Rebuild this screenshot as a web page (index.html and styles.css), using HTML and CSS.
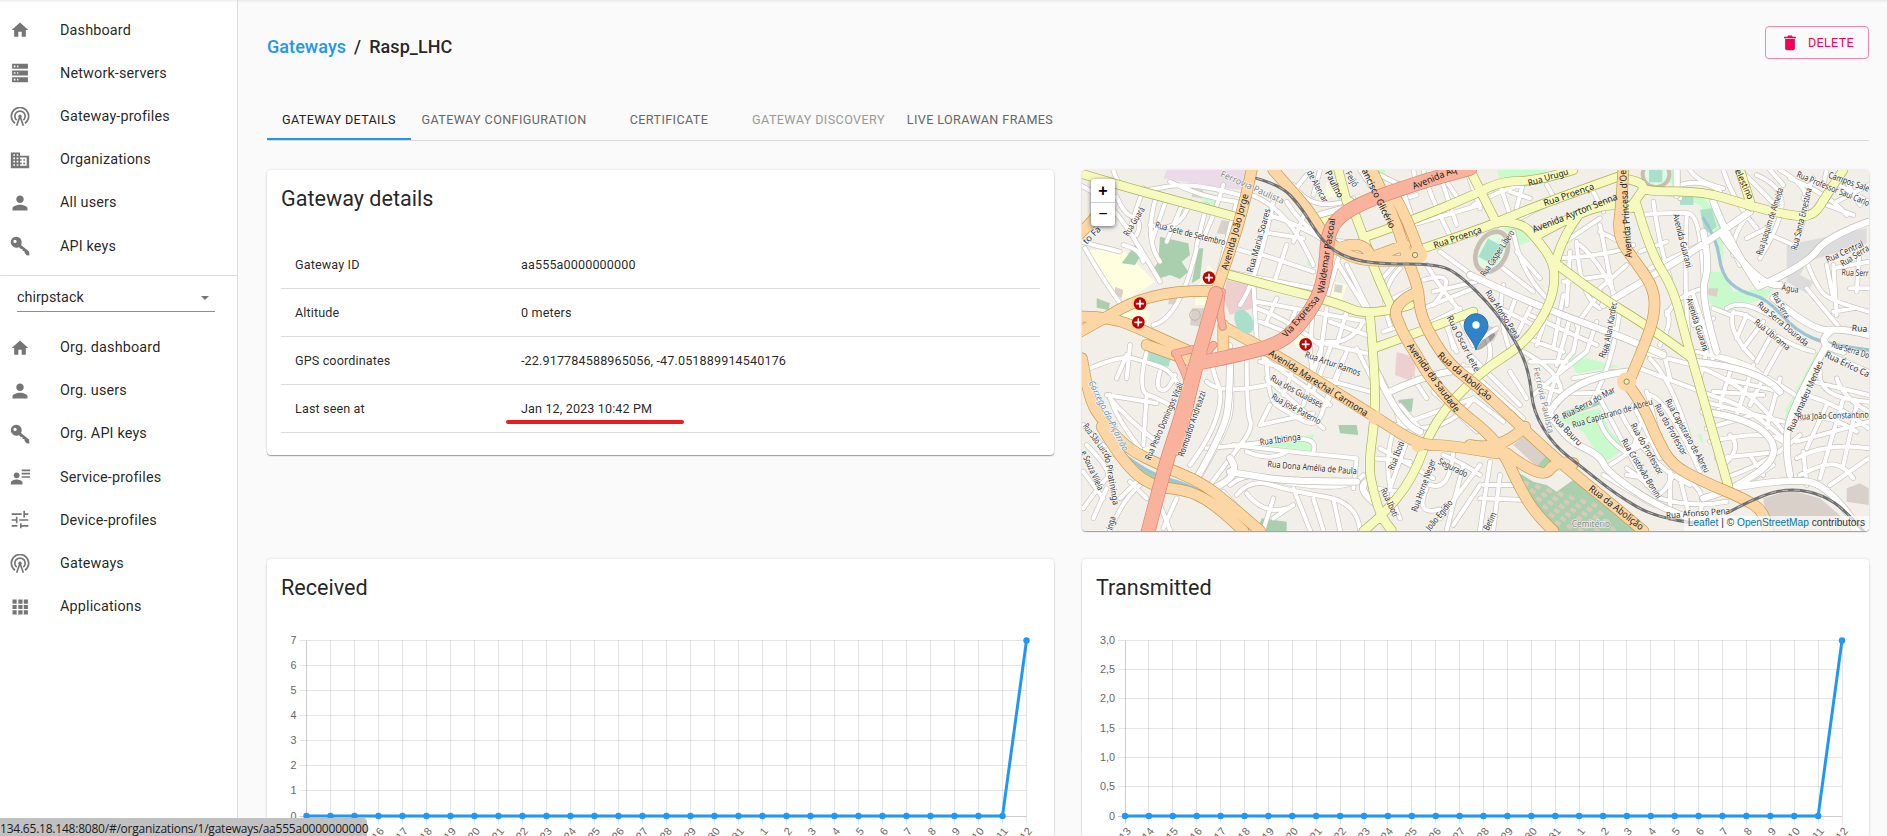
FILE: index.html
```
<!DOCTYPE html>
<html lang="en">
<head>
<meta charset="utf-8">
<title>ChirpStack - Rasp_LHC</title>
<link rel="stylesheet" href="styles.css">
</head>
<body>
<svg class="sprite" aria-hidden="true">
  <symbol id="i-home" viewBox="0 0 24 24"><path d="M10 20v-6h4v6h5v-8h3L12 3 2 12h3v8z"/></symbol>
  <symbol id="i-dns" viewBox="0 0 24 24"><path fill-rule="evenodd" d="M2.5 1h19v6h-19zM2.5 9h19v6h-19zM2.5 17h19v6h-19zM4.500 3v2h2V3zM8.500 3v2h1.500V3zM4.500 11v2h2v-2zM8.500 11v2h1.500v-2zM4.500 19v2h2v-2zM8.500 19v2h1.500v-2z"/></symbol>
  <symbol id="i-antenna" viewBox="0 0 24 24"><circle cx="12" cy="11" r="2"/><path fill="none" stroke="currentColor" stroke-width="2" d="M6 19.500A10.400 10.400 0 1 1 18 19.500M8 15.800a6.200 6.200 0 1 1 8 0M12 11l-4 11.500M12 11l4 11.500"/></symbol>
  <symbol id="i-business" viewBox="0 0 24 24"><path d="M12 7V3H1v19h22V7H12zM6 19H4v-2h2v2zm0-4H4v-2h2v2zm0-4H4V9h2v2zm0-4H4V5h2v2zm4 12H8v-2h2v2zm0-4H8v-2h2v2zm0-4H8V9h2v2zm0-4H8V5h2v2zm10 12h-8v-2h2v-2h-2v-2h2v-2h-2V9h8v10zm-2-8h-2v2h2v-2zm0 4h-2v2h2v-2z"/></symbol>
  <symbol id="i-person" viewBox="0 0 24 24"><path d="M12 12c2.500 0 4.500-2 4.500-4.500S14.500 3 12 3 7.500 5 7.500 7.500 9.500 12 12 12zm0 2c-3 0-9 1.340-9 4.500V21h18v-2.500C21 15.340 15 14 12 14z"/></symbol>
  <symbol id="i-key" viewBox="0 0 24 24"><path fill-rule="evenodd" d="M7.500 1a6.500 6.500 0 1 0 2.600 12.400l1.600.6 1.300 1.700 2 .1.200 2.100 2 .1.300 2 2.200 3 3.600.3-.4-4.800-9.700-7.800A6.500 6.500 0 0 0 7.500 1zM6 4.500a2 2 0 1 1 0 4 2 2 0 0 1 0-4z"/></symbol>
  <symbol id="i-profile" viewBox="0 0 24 24"><circle cx="8" cy="10" r="3.500"/><path d="M1 21v-2c0-2.700 4.700-4 7-4s7 1.300 7 4v2zM14 3h10v2H14zM14 7h10v2H14zM14 11h10v2H14z"/></symbol>
  <symbol id="i-tune" viewBox="0 0 24 24"><path d="M2 18v2h7v-2H2zM2 4v2h12V4H2zm12 18v-2h8v-2h-8v-2h-2v6h2zM7 8v3H2v2h5v3h2V8H7zm15 5v-2H11v2h11zM16 9h2V6h4V4h-4V1h-2v8z"/></symbol>
  <symbol id="i-apps" viewBox="0 0 24 24"><path d="M3 8h5V3H3v5zm7 13h5v-5h-5v5zm-7 0h5v-5H3v5zm0-6.500h5v-5H3v5zm7 0h5v-5h-5v5zM16.500 3v5h5V3h-5zM10 8h5V3h-5v5zm6.500 6.500h5v-5h-5v5zm0 6.500h5v-5h-5v5z"/></symbol>
  <symbol id="i-delete" viewBox="0 0 24 24"><path d="M5.500 19c0 1.500.8 2.500 2.200 2.500h8.600c1.400 0 2.200-1 2.200-2.500V6.500h-13zM20 3.500h-4.500L14.500 2h-5l-1 1.500H4v2h16z"/></symbol>
</svg>

<div class="app">
  <nav class="sidebar">
    <ul class="menu menu-main">
      <li><svg><use href="#i-home"/></svg><span>Dashboard</span></li>
      <li><svg><use href="#i-dns"/></svg><span>Network-servers</span></li>
      <li><svg><use href="#i-antenna"/></svg><span>Gateway-profiles</span></li>
      <li><svg><use href="#i-business"/></svg><span>Organizations</span></li>
      <li><svg><use href="#i-person"/></svg><span>All users</span></li>
      <li><svg><use href="#i-key"/></svg><span>API keys</span></li>
    </ul>
    <div class="org-select"><span>chirpstack</span><i class="caret"></i></div>
    <ul class="menu">
      <li><svg><use href="#i-home"/></svg><span>Org. dashboard</span></li>
      <li><svg><use href="#i-person"/></svg><span>Org. users</span></li>
      <li><svg><use href="#i-key"/></svg><span>Org. API keys</span></li>
      <li><svg><use href="#i-profile"/></svg><span>Service-profiles</span></li>
      <li><svg><use href="#i-tune"/></svg><span>Device-profiles</span></li>
      <li><svg><use href="#i-antenna"/></svg><span>Gateways</span></li>
      <li><svg><use href="#i-apps"/></svg><span>Applications</span></li>
    </ul>
  </nav>

  <main class="content">
    <header class="title-bar">
      <h1><a>Gateways</a><span class="slash">/</span><span>Rasp_LHC</span></h1>
      <button class="delete"><svg><use href="#i-delete"/></svg>DELETE</button>
    </header>
    <div class="tabs">
      <span class="tab t1 active">GATEWAY DETAILS</span>
      <span class="tab t2">GATEWAY CONFIGURATION</span>
      <span class="tab t3">CERTIFICATE</span>
      <span class="tab t4 disabled">GATEWAY DISCOVERY</span>
      <span class="tab t5">LIVE LORAWAN FRAMES</span>
    </div>

    <div class="grid">
      <section class="card details">
        <h2>Gateway details</h2>
        <dl>
          <div><dt>Gateway ID</dt><dd>aa555a0000000000</dd></div>
          <div><dt>Altitude</dt><dd>0 meters</dd></div>
          <div><dt>GPS coordinates</dt><dd>-22.917784588965056, -47.051889914540176</dd></div>
          <div><dt>Last seen at</dt><dd><span class="marked">Jan 12, 2023 10:42 PM</span></dd></div>
        </dl>
      </section>

      <section class="card map">
        <svg id="map" viewBox="6 15 2361 1083" preserveAspectRatio="none"></svg>
        <div class="zoom-ctl"><span>+</span><span>−</span></div>
        <div class="attribution"><a>Leaflet</a> | © <a>OpenStreetMap</a> contributors</div>
      </section>

      <section class="card chart"><h2>Received</h2><svg id="rx"></svg></section>
      <section class="card chart"><h2>Transmitted</h2><svg id="tx"></svg></section>
    </div>
  </main>
</div>
<div class="status">134.65.18.148:8080/#/organizations/1/gateways/aa555a0000000000</div>
<script src="app.js"></script>
</body>
</html>
```
FILE: styles.css
```
* { box-sizing: border-box; }
body { margin: 0; height: 836px; overflow: hidden; background: #fafafa; color: rgba(0,0,0,.87); font-family: Roboto, sans-serif; }
.sprite { position: absolute; width: 0; height: 0; }
h1, h2, ul, dl, dd { margin: 0; padding: 0; font-weight: 400; }
.app { display: flex; height: 836px; box-shadow: inset 0 3px 3px -2px rgba(0,0,0,.1); }
.sidebar { width: 238px; flex: none; background: #fff; border-right: 1px solid #dcdcdc; box-shadow: inset 0 3px 3px -2px rgba(0,0,0,.1); }
.menu { list-style: none; padding-top: 8px; }
.menu li { display: flex; align-items: center; height: 43.200px; padding-left: 10px; font-size: 14.400px; letter-spacing: .15px; }
.menu svg { width: 20px; height: 20px; margin-right: 30px; fill: #757575; color: #757575; flex: none; }
.menu-main { height: 276px; padding-top: 8.600px; border-bottom: 1px solid #dcdcdc; }
.org-select { display: flex; align-items: center; justify-content: space-between; margin: 8px 22px 6px 17px; height: 28px; border-bottom: 1px solid #8e8e8e; font-size: 14.400px; padding: 0 6px 0 0; }
.caret { border: 4.500px solid transparent; border-top-color: #757575; border-bottom: 0; }
.content { flex: 1; padding: 0 18px 0 29px; }
.title-bar { display: flex; justify-content: space-between; padding-top: 26px; height: 99px; }
h1 { display: flex; font-size: 18px; font-weight: 500; letter-spacing: .06px; line-height: 42px; }
h1 a { color: #2196f3; }
.slash { margin: 0 8px; }
.delete { display: flex; align-items: center; width: 104px; height: 33px; padding: 0 0 0 15px; border: 1px solid #fa84a8; border-radius: 4px; background: none; color: #f50057; font: 400 12.600px Roboto, sans-serif; letter-spacing: .3px; }
.delete svg { width: 18px; height: 18px; margin-right: 9px; fill: #f50057; }
.tabs { display: flex; height: 42px; border-bottom: 1px solid #d9d9d9; }
.tab { height: 41px; line-height: 42px; text-align: center; font-size: 12.600px; letter-spacing: .4px; color: #666; white-space: nowrap; }
.tab.active { color: #212121; border-bottom: 2px solid #2196f3; letter-spacing: .36px; }
.tab.disabled { color: #999; }
.t1 { width: 144px; } .t2 { width: 186px; } .t3 { width: 144px; } .t4 { width: 155px; } .t5 { width: 168px; }
.grid { display: grid; grid-template-columns: 787px 787px; column-gap: 28px; row-gap: 28px; padding-top: 29px; align-items: start; }
.card { background: #fff; border-radius: 4px; box-shadow: 0 1px 1px rgba(0,0,0,.35), 0 0 3px rgba(0,0,0,.12); overflow: hidden; }
h2 { font-size: 21.600px; line-height: 30px; }
.details { height: 285px; padding: 14px 14px 0; }
dl { margin-top: 27.500px; }
dl div { display: flex; height: 47.800px; padding: 0 14px; align-items: center; border-bottom: 1px solid #dcdcdc; font-size: 12.600px; letter-spacing: .13px; }
dt { width: 226px; }
.marked { position: relative; }
.marked::after { content: ""; position: absolute; left: -15px; top: 19px; width: 178px; height: 4px; border-radius: 2px; background: #eb1c20; }
.map { height: 361px; position: relative; }
.map > svg { display: block; width: 787px; height: 361px; background: #f2efe9; }
.zoom-ctl { position: absolute; left: 9px; top: 9px; width: 24px; height: 47px; background: #fff; border-radius: 3px; box-shadow: 0 1px 4px rgba(0,0,0,.6); }
.zoom-ctl span { display: block; height: 23px; text-align: center; font: bold 16px/24px "Liberation Sans", sans-serif; color: #000; }
.zoom-ctl span + span { border-top: 1px solid #ccc; line-height: 22px; font-weight: 400; }
.attribution { position: absolute; right: 0; bottom: 0; height: 15px; padding: 0 4px; background: rgba(255,255,255,.7); color: #333; font: 10.200px/14px "Liberation Sans", Arial, sans-serif; }
.attribution a { color: #0078a8; }
.chart { height: 277px; padding-top: 14px; border-radius: 4px 4px 0 0; }
.chart h2 { padding-left: 14px; }
.chart svg { display: block; width: 787px; height: 233px; font: 10.800px "Liberation Sans", Arial, sans-serif; fill: #666; }
.gl { stroke: rgba(0,0,0,.1); } .gl0 { stroke: rgba(0,0,0,.2); }
.series { fill: none; stroke: #2196f3; stroke-width: 3; }
.dot { fill: #2196f3; }
.status { position: absolute; left: 0; bottom: 0; width: 367px; height: 18px; background: #c1c1c1; border-top-right-radius: 4px; font: 12px/21px "Open Sans", sans-serif; letter-spacing: -.22px; color: #1a1a1a; white-space: nowrap; }
#map path { fill: none; stroke-linecap: round; stroke-linejoin: round; }
#map .park { fill: #aacfae; } #map .grass { fill: #c8facc; } #map .pitch { fill: #aadfcb; } #map .school { fill: #ffffe0; } #map .bld { fill: #d9d0c9; } #map .ind { fill: #ebdbe8; } #map .hosp { fill: #eecfcf; } #map .yard { fill: #dcdcdc; }
#map text { font: 27px "Noto Sans", sans-serif; fill: #333; stroke: rgba(255,255,255,.75); stroke-width: 4px; paint-order: stroke; }
#map text.onroad { stroke: none; fill: #222; }
#map text.rail { fill: #888; }
#map text.water { fill: #5a98cf; font-style: italic; }
```
FILE: app.js
```
const NS = 'http://www.w3.org/2000/svg';
function add(parent, tag, attrs, text) {
  const e = document.createElementNS(NS, tag);
  for (const k in attrs) e.setAttribute(k, attrs[k]);
  if (text !== undefined) e.textContent = text;
  parent.appendChild(e);
  return e;
}

/* ---------- charts ---------- */
function chart(id, x0, pitch, labels) {
  const s = document.getElementById(id), top = 37.5, bottom = 213.5;
  const days = [];
  for (let d = 13; d <= 31; d++) days.push(d);
  for (let d = 1; d <= 12; d++) days.push(d);
  const xr = x0 + 30 * pitch;
  labels.forEach((t, i) => {
    const y = Math.round(bottom - (bottom - top) * i / (labels.length - 1)) - .5;
    add(s, 'line', { x1: x0 - 7, x2: xr, y1: y, y2: y, class: i ? 'gl' : 'gl0' });
    add(s, 'text', { x: x0 - 10, y: y + 3, 'text-anchor': 'end' }, t);
  });
  days.forEach((d, i) => {
    const x = Math.round(x0 + i * pitch - .5) + .5;
    add(s, 'line', { x1: x, x2: x, y1: top, y2: bottom + 7, class: i ? 'gl' : 'gl0' });
    add(s, 'text', { transform: `translate(${x + 6} ${bottom + 15}) rotate(-50)`, 'text-anchor': 'end' }, d);
  });
  add(s, 'polyline', { class: 'series', points: `${x0},${bottom - .5} ${x0 + 29 * pitch},${bottom - .5} ${xr},${top}` });
  days.forEach((d, i) => add(s, 'circle', { class: 'dot', r: 3.2, cx: x0 + i * pitch, cy: i === 30 ? top : bottom - .5 }));
}
chart('rx', 39.5, 24, ['0', '1', '2', '3', '4', '5', '6', '7']);
chart('tx', 43, 23.9, ['0', '0,5', '1,0', '1,5', '2,0', '2,5', '3,0']);

/* ---------- map ---------- */
const map = document.getElementById('map');

/* turns "x,y x,y ..." into a path smoothed through the midpoints */
function smooth(str) {
  const p = str.trim().split(/\s+/).map(a => a.split(',').map(Number));
  if (p.length < 3) return 'M' + p.join('L');
  let d = 'M' + p[0];
  for (let i = 1; i < p.length - 1; i++) {
    const q = i === p.length - 2 ? p[i + 1] : [(p[i][0] + p[i + 1][0]) / 2, (p[i][1] + p[i + 1][1]) / 2];
    d += `Q${p[i]} ${q}`;
  }
  return d;
}
const areas = [
  ['ind', '260,15 500,15 495,75 430,70 250,40'],
  ['school', '15,255 130,255 225,350 150,400 120,400'], ['school', '130,405 210,440 200,490 100,450'],
  ['school', '350,375 385,300 405,320 380,420 345,420'], ['school', '640,510 690,500 700,540 650,550'],
  ['school', '745,345 800,360 780,425 740,400'], ['school', '740,50 780,90 735,100'], ['school', '165,850 225,845 230,865 180,875'],
  ['park', '240,215 325,235 330,270 305,290 325,320 300,342 270,330 240,340 215,320 235,290'],
  ['park', '335,355 355,250 370,250 360,340'], ['park', '125,295 165,240 190,260 165,300'], ['park', '50,400 90,415 85,435 50,428'],
  ['park', '775,780 830,780 835,810 780,805'], ['park', '955,705 1000,700 995,740 960,740'], ['park', '545,1060 620,1070 620,1098 530,1098'],
  ['park', '150,900 190,910 320,960 250,965 200,955'],
  ['grass', '370,85 410,95 405,125 365,115'], ['grass', '880,15 915,15 915,50 895,50'], ['grass', '505,840 700,808 700,862 600,855'],
  ['grass', '680,285 695,300 680,305'], ['grass', '1190,250 1215,240 1200,320 1185,300'], ['grass', '950,425 1000,410 1000,430 960,435'],
  ['pitch', '205,555 275,575 265,605 205,590'],
  ['hosp', '440,345 530,365 520,430 450,450 430,400'], ['hosp', '950,560 1010,580 1000,650 945,630'],
  ['bld', '425,165 460,170 450,210 410,205'], ['bld', '335,430 375,430 365,485 330,480'], ['bld', '270,380 300,380 295,418 265,418'], ['bld', '765,358 788,360 785,385 762,380'], ['bld', '1210,480 1260,490 1240,530 1200,520'],
  ['bld', '105,365 130,375 125,400 105,390'], ['bld', '340,70 370,75 365,100 335,95'],
  ['grass', '1250,15 1400,15 1390,40 1260,45'], ['grass', '1690,15 1790,15 1780,55 1700,55'],
  ['grass', '1800,95 1870,95 1910,150 1930,220 1930,290 1900,200 1860,120'], ['grass', '1890,320 1930,320 1960,380 2080,370 2060,400 1990,420 1940,440 1900,430 1885,400'],
  ['pitch', '1800,95 1840,95 1840,120 1800,120'], ['pitch', '1860,135 1895,130 1910,185 1875,210'], ['grass', '1270,190 1330,190 1350,230 1320,240'],
  ['bld', '1885,370 1915,370 1910,395 1885,390'], ['yard', '2120,240 2220,220 2360,190 2360,235 2180,290 2160,330 2200,350 2180,385 2120,350'],
  ['grass', '1455,562 1560,590 1620,605 1490,625'], ['grass', '1430,760 1560,730 1590,800 1635,835 1620,860 1570,895 1510,800'], ['park', '1450,740 1560,705 1570,715 1450,760'],
  ['grass', '2210,560 2240,570 2150,720 2125,850 2110,800 2120,730'], ['grass', '1850,810 1865,805 1870,840'],
  ['park', '1310,920 1360,950 1400,960 1430,980 1500,930 1650,1050 1690,1098 1430,1098 1370,1030'], ['bld', '1300,840 1340,805 1410,870 1375,910'], ['park', '1370,905 1400,870 1415,890 1390,910'],
  ['bld', '2050,1000 2130,975 2220,1000 2290,1060 2320,1098 2060,1098'], ['bld', '2300,970 2340,955 2366,970 2366,1020 2300,1010']
];
areas.forEach(([c, p]) => add(map, 'polygon', { class: c, points: p }));
add(map, 'ellipse', { cx: 1728, cy: 28, rx: 40, ry: 38, fill: '#dffce2', stroke: '#c9beb4', 'stroke-width': 12 });
add(map, 'rect', { x: 1707, y: 10, width: 40, height: 42, class: 'pitch' });
add(map, 'circle', { cx: 345, cy: 450, r: 16, fill: 'none', stroke: '#c0b5aa', 'stroke-width': 3 });
/* cemetery plots */
for (let i = 0; i < 7; i++) for (let j = 0; j < 6; j++) {
  const x = 1335 + i * 34 + j * 19, y = 945 + j * 24 + i * 11;
  if (x < 1560 + j * 20) add(map, 'rect', { x, y, width: 17, height: 12, fill: '#f0c9bd', opacity: .65, transform: `rotate(32 ${x} ${y})` });
}

const minor = `
0,60 40,80 100,130 170,230 240,350|6,230 40,240 120,260|15,250 60,330 120,415|100,15 115,70 190,80 330,50 480,90
110,95 130,145 190,170 170,210|190,70 150,190|230,90 190,220 240,290|260,100 215,230|310,110 260,230|270,50 370,100 470,110
380,120 350,240|430,60 410,130 370,220|330,110 300,210 210,180|470,110 420,300 380,480|350,250 300,460 220,480|130,240 180,250 190,290
500,85 620,120 700,300|580,110 530,350 480,420|560,150 620,160 740,230|540,200 670,220|520,260 700,320|680,130 640,230|620,240 580,360
620,110 700,240 820,230|430,240 530,270|440,320 700,370|640,60 700,150 820,100|680,30 640,80|720,15 700,90|760,60 800,120|900,30 960,60
940,110 1010,90|960,190 1200,120|1030,15 1050,100 1120,230|1090,60 1130,180|1160,15 1200,130|1000,15 1010,60|840,15 870,60|1140,110 1080,20
770,290 850,420|790,230 740,400|800,300 870,440|900,350 960,280|1030,345 1150,310 1060,420|1040,300 1100,400 1170,470|1060,380 1190,350|1080,260 1190,340
530,410 860,470|530,430 620,460 720,540|520,350 530,520|590,400 560,470|650,430 620,500|700,400 690,560|740,430 720,580|800,440 770,540|850,470 810,540 740,530|750,470 860,510|540,470 640,510
930,480 890,380 960,310|910,500 970,480|940,400 1000,370|1030,430 1180,370|1040,480 1140,430|1090,460 1130,560|1130,440 1180,540|1100,470 1120,550
150,540 140,640|30,610 120,570 200,590 280,620 300,670|200,560 170,680 240,700 300,740|140,570 110,640|240,620 225,670 265,680 285,630
80,690 230,715|90,700 150,770 230,830|90,690 95,740 180,850|10,780 60,840 120,880|200,690 190,840|20,840 100,920 60,960 10,1030
10,920 70,1000|150,950 200,1000|120,1000 180,940|80,970 40,1060|90,1095 130,1000 180,960|240,1020 270,1095|290,1000 250,1090
450,540 460,700 440,800 350,950|500,560 500,740 520,790 450,880 390,960|380,650 420,690 560,660|390,560 400,630 430,690 390,820 330,900
560,560 560,700 620,740 710,790 740,700 790,580|550,580 700,680 750,720|560,640 730,790|640,610 610,690|690,560 700,640|720,560 670,720
540,780 700,745|540,780 570,720|460,840 620,860 830,880|380,850 500,840 720,810 700,860|500,860 570,890 620,860|450,960 500,920 630,960 820,970 850,930
540,590 870,680|710,530 880,570|750,550 700,680|800,560 740,720|830,550 880,650|470,990 510,940 640,980 830,1010 840,1095|500,985 550,1050 620,1030
580,1000 550,1095|640,970 690,1095|700,1000 730,1095|760,1000 780,1095|430,980 520,1080|640,1020 580,1060|830,880 820,970
930,680 1080,620 1190,600|960,780 940,690 880,600|890,760 1080,840 1180,700|1060,680 1130,740 1190,800|1000,640 1040,700|960,720 1020,790|960,780 1180,700
880,880 990,890|900,850 1060,940|940,800 900,920 960,1060|980,830 930,970|880,970 960,980|1090,870 1160,900 1200,930|1120,860 1110,980 1050,960|1150,900 1100,1095
1200,900 1080,1060|1040,970 1000,1060 1090,1030|1200,960 1120,1080|1230,890 1200,1095|1260,930 1240,1095|1200,1000 1340,1005|1210,960 1320,960
1150,600 1330,760|1170,570 1320,720|1210,500 1260,580 1190,640|1180,700 1270,770|1190,530 1250,490
1180,120 1280,60 1470,20|1260,60 1290,150|1330,50 1310,130|1400,60 1430,110|1290,80 1350,100|1300,170 1470,80|1530,60 1570,140
1300,200 1320,320 1400,400|1270,310 1360,380|1310,260 1380,340|1470,260 1460,420|1440,280 1600,270 1660,240|1450,350 1590,330|1490,230 1500,400 1560,430|1560,180 1600,390
1500,240 1560,290 1610,400|1440,240 1560,160|1560,200 1620,230|1640,300 1560,370|1270,360 1250,440 1290,560|1310,390 1270,500|1360,410 1310,510|1420,390 1370,540|1450,390 1420,550
1350,450 1460,500 1550,540|1340,520 1450,560|1470,460 1430,600|1500,460 1480,560|1550,470 1520,560|1600,490 1570,570|1260,430 1360,480|1620,430 1600,600 1530,720
1560,380 1490,480|1680,150 1800,140 1850,150 1870,300 1870,390 1900,600|1720,110 1740,250 1770,340|1680,260 1760,230|1710,310 1860,240|1820,150 1810,390 1830,560|1870,370 1790,390 1760,450
1760,440 1780,470 1740,540|1840,390 1890,540|1840,480 1900,460|1790,15 1800,100|1800,60 1870,40 1920,80|1830,15 1850,50 1930,70|1930,15 1960,110 2030,190
1900,110 1910,160 1980,300|1960,270 1950,210 2020,130|1980,15 2080,110 2110,150|2030,30 2100,60 2110,160 2040,280|2070,15 2110,60|2100,15 2180,60 2180,150 2140,250
2130,40 2250,90 2300,150|2270,110 2366,60|2260,50 2366,110|2200,40 2170,100|2240,120 2320,150|2240,15 2230,60|2300,50 2340,120|2050,200 2140,240|2000,220 2060,190
2180,290 2210,370 2260,410 2366,440|2240,300 2260,400|2260,310 2366,290|2260,300 2270,450|2340,240 2330,380|2310,370 2366,370|2260,440 2320,430|2180,370 2280,490
1950,450 1980,430 2120,540 2200,560|1940,430 2000,390 2140,500|1960,440 1940,500 2020,580|2000,450 1970,520|2050,470 1990,550|2080,500 2030,590|2100,550 2060,620|1900,430 1950,450
1900,570 2060,600 2090,690|1850,560 1930,580 2060,630 2160,700|1840,600 1900,620 2030,700 2110,800|1680,560 1840,600|1710,580 1790,660 1850,900|1750,560 1770,640
1680,610 1860,680 2010,730 2120,830|1870,710 2110,770|1880,790 2020,750|1890,830 2060,790 2110,830|1910,880 2100,860|1930,940 2060,900 2160,810|1960,980 2080,900
2010,870 2050,930|1880,560 1860,640|1960,590 1910,750|2020,600 1970,750|2060,620 2010,720|2100,640 2060,790|1930,640 2100,680|1900,680 2050,690|1950,810 1990,850 1930,900
2220,620 2210,700 2366,710|2230,560 2366,620|2200,650 2366,690|2180,690 2280,720 2366,790|2160,760 2240,740 2330,800|2150,830 2366,770|2150,880 2240,830 2366,850|2160,930 2240,890 2300,910 2320,940
2290,700 2220,940|2330,720 2290,900|2366,880 2250,960|2270,640 2290,700 2366,740|2170,860 2180,960|2240,720 2180,850
1700,680 1720,730 1740,860|1710,690 1760,700 1860,920|1620,740 1700,900 1830,960|1560,700 1620,820 1700,960|1660,720 1740,880|1640,850 1740,810|1590,900 1700,830|1560,770 1580,830 1650,870
1640,910 1700,950 1740,1010 1780,930|1770,920 1770,1060|1790,930 1890,970 1860,1040|1740,1000 1840,1030 1940,1010|1700,940 1640,930|1680,780 1660,850|1800,940 1830,1060|1570,930 1720,1020
1400,740 1420,620 1480,560|1360,690 1440,620 1520,560|1330,560 1480,640 1430,720|1480,640 1600,620|1370,640 1410,700 1570,680|1350,590 1460,590|1290,620 1340,700`;
const major = `
1170,330 1300,390 1470,460 1640,520 1750,570|1570,420 1720,330 1870,240 2010,140|1900,110 1940,220 2035,365|2035,365 2180,300 2240,215 2366,170|1930,215 2040,370 2100,360|1870,200 1890,300 1860,390 1910,560
450,560 450,700 430,800 350,940|450,920 500,930 640,950 830,950|450,880 490,930 400,970|930,680 1100,600 1200,620|890,620 960,780 1020,800|1410,740 1470,640 1640,620|1400,730 1450,820 1560,870 1580,920 1740,1030 1830,1060
1840,590 2040,610 2100,680|1870,740 2020,760 2110,870 1950,980 1870,1000|2240,540 2150,700 2110,830 2130,930|1950,970 2120,940 2250,960 2340,1095|2250,500 2200,540 2290,560|2080,400 2200,500 2290,490 2366,510|860,950 830,970 880,1010|960,60 990,150|720,150 830,120|1790,15 1790,90`;
const yellow = `
0,25 150,70 300,110 465,155|450,330 600,370 760,410 870,455 990,420|870,455 880,560 888,740 865,900 880,980 905,1060 935,1095|810,110 850,210 880,310 940,440
850,218 1000,165 1180,90 1265,48 1370,48 1480,15|1030,250 1180,200 1260,168 1390,115 1615,35|715,175 800,150|800,110 775,15|1250,170 1320,170 1370,220 1420,290 1425,360 1400,440 1330,540 1200,620 1060,770 1000,940 900,1060 850,1098
1375,210 1480,150 1610,110 1670,130|1430,280 1450,210 1500,145|1170,15 1250,175|1420,290 1550,390 1700,480 1830,575|1620,38 1690,50 1685,80 1870,78 2000,120 2130,152 2200,155 2240,90 2290,15|1685,80 1650,130|1670,120 1710,260 1780,370 1815,510 1890,770 1945,965|1980,15 2015,125|900,1050 935,1098|880,550 1020,500 1180,440`;
const orange = `
515,15 500,90 460,230 410,375|580,15 620,60 690,140 750,240 830,285 930,288 1000,285 1020,265|875,15 915,100 955,190 985,290 1015,370 1020,440 1050,510 1110,600 1200,670 1270,735 1410,865 1510,950 1610,1030 1690,1098
940,85 985,165 1015,255|770,252 860,215 875,285|975,240 880,275|1015,380 935,415 965,500 1010,570 1050,640 1130,730 1220,800 1270,860 1320,970 1370,1050 1420,1098|430,485 570,560 700,640 885,755 1015,840 1110,840 1250,865
1170,840 1260,860 1335,785|1280,865 1385,945 1430,885 1480,895|0,455 90,455 200,500 330,560|90,450 210,372 395,378|0,500 90,450|0,205 60,150 80,100|6,580 25,700 70,770 140,850 250,905 360,950 440,1010 540,1098|65,785 120,880 210,965 330,975 420,1030 490,1098|430,480 430,560|340,590 200,540
1630,15 1625,110 1612,215 1670,295 1722,370 1725,450 1690,550 1645,655|1645,660 1690,720 1730,820 1775,900 1870,950 1990,1000 2055,1040 2065,1098`;
const slip = '425,380 415,440 428,485|288,565 315,620 335,680|285,565 350,550|400,540 345,600';
const red = `
1170,10 1060,40 950,75 850,112 775,155 742,210 738,310 715,400 660,480 600,535 480,570 350,595|408,385 385,470 335,640 300,770 255,900 205,1098|360,560 335,650 290,850`;
const groups = [
  [minor, 12, '#fff', '#c8c4be', 4], [major, 19, '#fff', '#c2beb8', 4],
  [yellow, 25, '#f7fabf', '#aab055', 4], [orange, 31, '#fcd6a4', '#c59a50', 4], [slip, 20, '#f9b29c', '#d88572', 4], [red, 40, '#f9b29c', '#d88572', 4]
];
/* stream */
['1870,160 1910,220 1925,330 1980,380 2060,400 2150,500 2250,540 2366,555', '120,860 200,925 330,960 430,1020 520,1098'].forEach(p =>
  add(map, 'path', { d: smooth(p), stroke: '#9cc5d3', 'stroke-width': 10 }));
groups.forEach(([src, w, fill, edge, b]) => {
  const d = src.trim().split(/[|\n]/).map(smooth).join('');
  add(map, 'path', { d, stroke: edge, 'stroke-width': w + b });
  add(map, 'path', { d, stroke: fill, 'stroke-width': w });
});
/* stadium and lake */
add(map, 'ellipse', { cx: 1235, cy: 260, rx: 44, ry: 64, transform: 'rotate(28 1235 260)', fill: '#dffce2', stroke: '#c9beb4', 'stroke-width': 14 });
add(map, 'rect', { x: 1207, y: 230, width: 56, height: 62, transform: 'rotate(28 1235 260)', class: 'pitch' });
add(map, 'ellipse', { cx: 492, cy: 470, rx: 26, ry: 38, class: 'pitch', transform: 'rotate(-30 492 470)' });
[[1640, 650, 22], [1015, 268, 20], [885, 758, 14], [1015, 840, 14], [1270, 860, 10]].forEach(([cx, cy, r]) =>
  add(map, 'circle', { cx, cy, r, fill: '#fcd6a4', stroke: '#fcd6a4', 'stroke-width': 14 }));
[[1640, 650], [1005, 270]].forEach(([cx, cy]) => add(map, 'circle', { cx, cy, r: 8, fill: '#d9f0cf', stroke: '#a98a3c', 'stroke-width': 3 }));
/* railway */
['530,40 600,60 660,120 730,235 800,280 900,297 1060,297 1130,320 1250,440 1325,560 1350,640 1360,740 1420,840 1510,910 1610,990 1730,1060 1850,1075',
 '1940,1045 2040,990 2140,970 2230,990 2300,1040 2350,1098'].forEach(p => {
  add(map, 'path', { d: smooth(p), stroke: '#707070', 'stroke-width': 9 });
  add(map, 'path', { d: smooth(p), stroke: '#bbb', 'stroke-width': 3, 'stroke-dasharray': '18 18', style: 'stroke-linecap:butt' });
});

/* labels run from the first point to the second */
const labels = [
  [140,212,190,130,'Rua Guará'],[225,182,435,236,'Rua Sete de Setembro'],[437,315,500,88,'Avenida João Jorge','onroad',28],[512,322,566,132,'Rua Maria Soares'],
  [422,28,610,112,'Ferrovia Paulista','rail'],[15,235,60,190,'to Fa'],[685,20,735,112,'de Alencar'],[740,20,780,98,'Paulino','onroad'],[800,22,825,65,'Feijó'],[850,15,935,190,'ancisco Glicério','onroad',27],
  [1000,68,1130,15,'Avenida Aq','onroad',28],[1062,245,1205,196,'Rua Proença','onroad'],[615,515,715,398,'Via Expressa','onroad',27],[725,385,760,160,'Waldemar Pascoal','onroad',27],
  [1105,455,1190,620,'Rua Oscar Leite'],[985,540,1130,740,'Avenida da Saudade','onroad',28],[1075,570,1230,703,'Rua da Abolição','onroad',28],[567,565,860,750,'Avenida Marechal Carmona','onroad',28],
  [675,570,840,628,'Rua Artur Ramos'],[572,640,725,724,'Rua dos Guaiases'],[575,695,720,774,'Rua José Paterno'],[540,835,662,818,'Rua Ibitinga'],[562,900,830,922,'Rua Dona Amélia de Paula'],
  [30,650,135,858,'Córrego do Piçarrão','water'],[205,885,305,655,'Rua Pedro Domingos Vitali'],[305,875,372,680,'Romualdo Andreazzi'],[12,780,75,865,'Rua São Luiz'],[78,865,105,1020,'do Piratininga'],[8,860,60,975,'e Souza Vilela'],[90,1095,102,1055,'inga'],
  [935,915,968,832,'Rua Iboti'],[907,972,945,1055,'Rua Iboti'],[1005,1040,1062,885,'Rua Horne Neger'],[1075,890,1160,932,'Segurado'],[1045,1095,1115,1010,'João Egídio'],
  [1345,58,1465,22,'Rua Urugu','onroad'],[1392,118,1542,66,'Rua Proença','onroad'],[1360,198,1612,97,'Avenida Ayrton Senna','onroad',28],[1650,278,1632,15,"Avenida Princesa d'Oe",'onroad',28],[1210,333,1300,200,'Rua Casper Líbero'],
  [1220,380,1312,520,'Rua Afonso Pena'],[1578,572,1605,412,'Rua Allan Kardec'],[1784,148,1825,308,'Avenida Guarani'],[1824,400,1875,558,'Avenida Guarani'],[1970,15,2010,103,'elestino','onroad'],[2040,270,2105,70,'Rua Joaquim de Almeida'],[2145,255,2190,70,'Rua Santa Ernestina'],
  [2150,30,2366,118,'Rua Professor Saul Carlo'],[2245,32,2366,75,'Campos Sale'],[2240,288,2350,238,'Rua Central'],[2285,300,2366,250,'Rua Serra'],[2285,325,2366,328,'Rua Serr'],[2105,370,2155,378,'Água'],[2080,385,2120,460,'Rua Serra'],[2034,418,2180,540,'Rua Serra Dourada'],[2024,470,2125,553,'Rua Ubirama'],[2315,492,2362,495,'Rua'],[2255,540,2366,575,'Rua Serra Do'],
  [2235,570,2366,632,'Rua Érico Ca'],[2132,800,2225,590,'Rua Amadeu Mendes'],[2152,758,2366,752,'Rua João Constantino'],[1567,578,1582,540,'Rua'],
  [1450,758,1605,675,'Rua Serra do Mar'],[1478,783,1718,712,'Rua Capistrano de Abreu'],[1418,755,1500,840,'Rua Bauru'],[1365,608,1410,805,'Ferrovia Paulista','rail'],[1656,778,1740,928,'Rua do Professor'],[1628,825,1735,1000,'Rua Cristóvão Bonini'],[1728,720,1812,870,'Rua do Professor'],[1760,705,1880,922,'Rua Capistrano de Abreu'],
  [1528,970,1685,1092,'Rua da Abolição','onroad',28],[1758,1055,1950,1040,'Rua Afonso Pena'],[1220,1095,1245,1045,'Betim'],[1475,1080,1590,1080,'Cemitério','rail']
];
labels.forEach(([x1, y1, x2, y2, t, c, fs]) => {
  const a = Math.atan2(y2 - y1, x2 - x1) * 180 / Math.PI;
  const e = add(map, 'text', { transform: `translate(${x1} ${y1}) rotate(${a})`, dy: 6, textLength: Math.hypot(x2 - x1, y2 - y1), lengthAdjust: 'spacingAndGlyphs', class: c || '' }, t);
  if (fs) e.style.fontSize = fs + 1 + 'px';
});
/* hospitals */
[[387, 338], [180, 416], [175, 472], [677, 538]].forEach(([x, y]) => {
  add(map, 'circle', { cx: x, cy: y, r: 19, fill: '#bf0000' });
  add(map, 'path', { d: `M${x - 10} ${y}h20M${x} ${y - 10}v20`, stroke: '#fff', 'stroke-width': 5 });
});
/* pin */
add(map, 'ellipse', { cx: 1218, cy: 530, rx: 36, ry: 9, fill: '#000', opacity: .28, transform: 'rotate(-42 1218 530)' });
const pin = add(map, 'path', { d: 'M1188 554C1180 525 1152 505 1152 482A36 36 0 0 1 1224 482C1224 505 1196 525 1188 554Z', stroke: '#2a6fa8', 'stroke-width': 3 });
pin.style.fill = '#2f84c9';
add(map, 'circle', { cx: 1188, cy: 480, r: 11, fill: '#fff' });
```
